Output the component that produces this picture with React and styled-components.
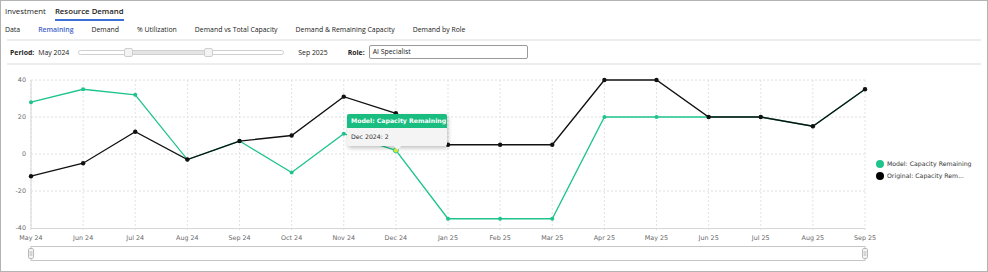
import React from "react";
import styled, { createGlobalStyle } from "styled-components";

const GlobalStyle = createGlobalStyle`
  html, body { margin: 0; padding: 0; background: #ffffff; }
  body { font-family: "Open Sans", "Noto Sans", sans-serif; }
`;

const Frame = styled.div`
  width: 988px;
  height: 272px;
  box-sizing: border-box;
  border: 1px solid #b3b3b3;
  padding-top: 3px;
  overflow: hidden;
  background: #ffffff;
`;

const TopTabs = styled.div`
  display: flex;
  gap: 9px;
  padding-left: 4px;
`;

const TopTab = styled.div`
  font-size: 7.8px;
  line-height: 14px;
  color: #222;
  padding-bottom: 1px;
  border-bottom: 2px solid ${p => (p.$active ? "#3b6fd6" : "transparent")};
  font-weight: ${p => (p.$active ? 600 : 400)};
`;

const SubTabs = styled.div`
  display: flex;
  gap: 18px;
  margin-top: 2px;
  padding-left: 4px;
`;

const SubTab = styled.div`
  font-size: 6.9px;
  line-height: 14px;
  color: ${p => (p.$active ? "#3f63c9" : "#222")};
  font-weight: ${p => (p.$active ? 600 : 400)};
`;

const Divider = styled.div`
  height: 2px;
  margin: ${p => p.$top || 0}px 6px 0 6px;
  background: #ededed;
`;

const FilterRow = styled.div`
  height: 22px;
  display: flex;
  align-items: center;
  padding-left: 9px;
  font-size: 6.9px;
  color: #222;
`;

const Label = styled.span`
  font-weight: 700;
  margin-left: ${p => p.$ml || 0}px;
`;

const Value = styled.span`
  margin-left: ${p => p.$ml || 0}px;
`;

const Track = styled.div`
  position: relative;
  width: 206px;
  height: 5px;
  margin-left: 9px;
  border: 1px solid #cfcfcf;
  border-radius: 3px;
  background: #fff;
  box-sizing: border-box;
`;

const Range = styled.div`
  position: absolute;
  top: 0;
  bottom: 0;
  left: 50px;
  width: 80px;
  background: #e4e4e4;
`;

const Handle = styled.div`
  position: absolute;
  top: -3px;
  width: 9px;
  height: 9px;
  box-sizing: border-box;
  border: 1px solid #cfcfcf;
  border-radius: 2px;
  background: #f3f3f3;
  left: ${p => p.$x}px;
`;

const RoleInput = styled.div`
  width: 159px;
  height: 14px;
  box-sizing: border-box;
  margin-left: 4px;
  border: 1px solid #9a9a9a;
  border-radius: 2px;
  padding-left: 3px;
  line-height: 12px;
  font-size: 6.9px;
`;

const ChartWrap = styled.div`
  position: relative;
  height: 206px;
`;

const Tooltip = styled.div`
  position: absolute;
  left: 346px;
  top: 49px;
  width: 100px;
  height: 32px;
  border-radius: 2px;
  background: #f4f4f4;
  box-shadow: 1px 2px 4px rgba(0, 0, 0, 0.25);
  font-family: "DejaVu Sans", Verdana, sans-serif;
  font-size: 6.2px;
  &::after {
    content: "";
    position: absolute;
    left: 48px;
    bottom: -3px;
    width: 5px;
    height: 5px;
    background: #f4f4f4;
    transform: rotate(45deg);
  }
`;

const TipHead = styled.div`
  height: 14px;
  line-height: 14px;
  padding-left: 4px;
  background: #19bd80;
  color: #fff;
  font-weight: 700;
  border-radius: 2px 2px 0 0;
`;

const TipBody = styled.div`
  line-height: 18px;
  padding-left: 4px;
  color: #333;
`;

const months = ["May 24", "Jun 24", "Jul 24", "Aug 24", "Sep 24", "Oct 24", "Nov 24", "Dec 24", "Jan 25", "Feb 25", "Mar 25", "Apr 25", "May 25", "Jun 25", "Jul 25", "Aug 25", "Sep 25"];
const model = [28, 35, 32, -3, 7, -10, 11, 2, -35, -35, -35, 20, 20, 20, 20, 15, 35];
const original = [-12, -5, 12, -3, 7, 10, 31, 22, 5, 5, 5, 40, 40, 20, 20, 15, 35];

const X0 = 31;
const X1 = 865;
const xAt = i => X0 + ((X1 - X0) * i) / 16;
const yAt = v => 154 - v * 1.85;
const pts = arr => arr.map((v, i) => `${xAt(i)},${yAt(v)}`).join(" ");

const GREEN = "#1fc48c";
const AXIS = "#6b6b6b";

function Chart() {
  return (
    <svg width="986" height="206" style={{ display: "block" }}>
      <g transform="translate(-1,-65)" fontFamily='"DejaVu Sans", Verdana, sans-serif'>
        {[40, 20, 0, -20].map(v => (
          <line key={v} x1={X0} x2={X1} y1={yAt(v)} y2={yAt(v)} stroke="#dedede" strokeWidth="1" strokeDasharray="2,2" />
        ))}
        {months.map((m, i) => (
          <line key={m} x1={xAt(i)} x2={xAt(i)} y1={80} y2={231} stroke="#e2e2e2" strokeWidth="1" strokeDasharray="2,2" />
        ))}
        <line x1={X0} x2={X0} y1={80} y2={229} stroke="#d6d6d6" />
        <line x1={X0} x2={X1} y1={228.5} y2={228.5} stroke="#d6d6d6" />
        {[40, 20, 0, -20, -40].map(v => (
          <text key={v} x={26} y={yAt(v) + 2} textAnchor="end" fontSize="6.4" fill={AXIS}>{v}</text>
        ))}
        {months.map((m, i) => (
          <text key={m} x={xAt(i)} y={240} textAnchor="middle" fontSize="6.4" fill={AXIS}>{m}</text>
        ))}
        <polyline points={pts(model)} fill="none" stroke={GREEN} strokeWidth="1.3" />
        {model.map((v, i) => (
          <circle key={i} cx={xAt(i)} cy={yAt(v)} r="2" fill={GREEN} />
        ))}
        <polyline points={pts(original)} fill="none" stroke="#111" strokeWidth="1.3" />
        {original.map((v, i) => (
          <circle key={i} cx={xAt(i)} cy={yAt(v)} r="2.2" fill="#111" />
        ))}
        <circle cx={xAt(7)} cy={yAt(2)} r="2.6" fill="#d4f03c" stroke={GREEN} strokeWidth="0.8" />
        <circle cx={880} cy={164} r="4" fill={GREEN} />
        <text x={887} y={166.3} fontSize="6.2" fill="#333">Model: Capacity Remaining</text>
        <circle cx={880} cy={176} r="4" fill="#000" />
        <text x={887} y={178.3} fontSize="6.2" fill="#333">Original: Capacity Rem...</text>
        <rect x={X0} y={246.5} width={X1 - X0} height={14} fill="#fff" stroke="#c6c6c6" />
        {[X0, X1].map(x => (
          <g key={x}>
            <rect x={x - 2.5} y={248.5} width={5} height={10} rx={1.2} fill="#f4f4f4" stroke="#a9a9a9" strokeWidth="0.8" />
            <line x1={x - 0.8} x2={x - 0.8} y1={251} y2={256} stroke="#a9a9a9" strokeWidth="0.6" />
            <line x1={x + 0.8} x2={x + 0.8} y1={251} y2={256} stroke="#a9a9a9" strokeWidth="0.6" />
          </g>
        ))}
      </g>
    </svg>
  );
}

const topTabs = ["Investment", "Resource Demand"];
const subTabs = ["Data", "Remaining", "Demand", "% Utilization", "Demand vs Total Capacity", "Demand & Remaining Capacity", "Demand by Role"];

export default function App() {
  return (
    <>
      <GlobalStyle />
      <Frame>
        <TopTabs>
          {topTabs.map(t => (
            <TopTab key={t} $active={t === "Resource Demand"}>{t}</TopTab>
          ))}
        </TopTabs>
        <SubTabs>
          {subTabs.map(t => (
            <SubTab key={t} $active={t === "Remaining"}>{t}</SubTab>
          ))}
        </SubTabs>
        <Divider $top={2} />
        <FilterRow>
          <Label>Period:</Label>
          <Value $ml={4}>May 2024</Value>
          <Track>
            <Range />
            <Handle $x={45} />
            <Handle $x={125} />
          </Track>
          <Value $ml={14}>Sep 2025</Value>
          <Label $ml={20}>Role:</Label>
          <RoleInput>AI Specialist</RoleInput>
        </FilterRow>
        <Divider />
        <ChartWrap>
          <Chart />
          <Tooltip>
            <TipHead>Model: Capacity Remaining</TipHead>
            <TipBody>Dec 2024: 2</TipBody>
          </Tooltip>
        </ChartWrap>
      </Frame>
    </>
  );
}
